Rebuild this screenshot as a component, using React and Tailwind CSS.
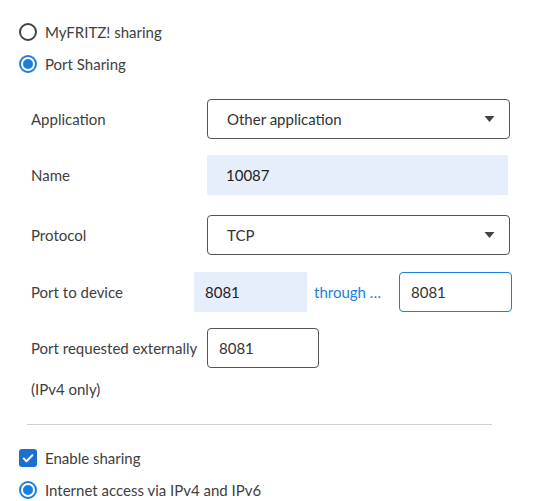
import React from 'react';

const FONT = { fontFamily: 'Lato, "Noto Sans", sans-serif' };

function Radio({ checked }) {
  return checked ? (
    <span className="flex h-[18px] w-[18px] items-center justify-center rounded-full border-2 border-[#1a7fdc]">
      <span className="h-[10px] w-[10px] rounded-full bg-[#1a7fdc]" />
    </span>
  ) : (
    <span className="h-[18px] w-[18px] rounded-full border-2 border-[#444]" />
  );
}

function Checkbox() {
  return (
    <span className="flex h-[18px] w-[18px] items-center justify-center rounded-[3px] bg-[#1a6fd0]">
      <svg viewBox="0 0 16 16" className="h-[14px] w-[14px]">
        <path d="M3 8.5l3.2 3.2L13 4.8" fill="none" stroke="white" strokeWidth="2.2" strokeLinecap="round" strokeLinejoin="round" />
      </svg>
    </span>
  );
}

function Select({ value }) {
  return (
    <div className="flex h-[40px] w-[303px] items-center justify-between rounded-[4px] border border-[#555] pl-[19px] pr-[14px] text-[#333]">
      <span>{value}</span>
      <svg viewBox="0 0 10 6" className="h-[6px] w-[11px]">
        <path d="M0 0h10L5 6z" fill="#444" />
      </svg>
    </div>
  );
}

export default function App() {
  return (
    <div className="h-[501px] w-[537px] overflow-hidden bg-white text-[15px] leading-[22px] text-[#404040]" style={FONT}>
      <div className="flex flex-col gap-[10px] pl-[19px] pt-[21px]">
        <label className="flex items-center gap-[8px]">
          <Radio />
          <span>MyFRITZ! sharing</span>
        </label>
        <label className="flex items-center gap-[8px]">
          <Radio checked />
          <span>Port Sharing</span>
        </label>
      </div>

      <div className="mt-[24px] flex flex-col pl-[31px]">
        <div className="flex items-center">
          <span className="w-[176px]">Application</span>
          <Select value="Other application" />
        </div>
        <div className="mt-[16px] flex items-center">
          <span className="w-[176px]">Name</span>
          <div className="flex h-[40px] w-[301px] items-center bg-[#e6edfb] pl-[19px] text-[#222]">10087</div>
        </div>
        <div className="mt-[20px] flex items-center">
          <span className="w-[176px]">Protocol</span>
          <Select value="TCP" />
        </div>
        <div className="mt-[17px] flex items-center">
          <span className="w-[163px]">Port to device</span>
          <div className="flex h-[40px] w-[113px] items-center bg-[#e6edfb] pl-[11px] text-[#222]">8081</div>
          <span className="ml-[7px] w-[85px] text-[#1a80e0]">through …</span>
          <div className="flex h-[40px] w-[113px] items-center rounded-[4px] border border-[#1a80e0] pl-[11px] text-[#333]">8081</div>
        </div>
        <div className="mt-[16px] flex items-center">
          <span className="w-[176px]">Port requested externally</span>
          <div className="flex h-[40px] w-[112px] items-center rounded-[4px] border border-[#555] pl-[11px] text-[#333]">8081</div>
        </div>
        <div className="mt-[10px]">(IPv4 only)</div>
      </div>

      <div className="ml-[27px] mt-[24px] h-px w-[465px] bg-[#d0d0d0]" />

      <div className="mt-[22px] flex flex-col gap-[10px] pl-[19px]">
        <label className="flex items-center gap-[8px]">
          <Checkbox />
          <span>Enable sharing</span>
        </label>
        <label className="flex items-center gap-[8px]">
          <Radio checked />
          <span>Internet access via IPv4 and IPv6</span>
        </label>
      </div>
    </div>
  );
}
